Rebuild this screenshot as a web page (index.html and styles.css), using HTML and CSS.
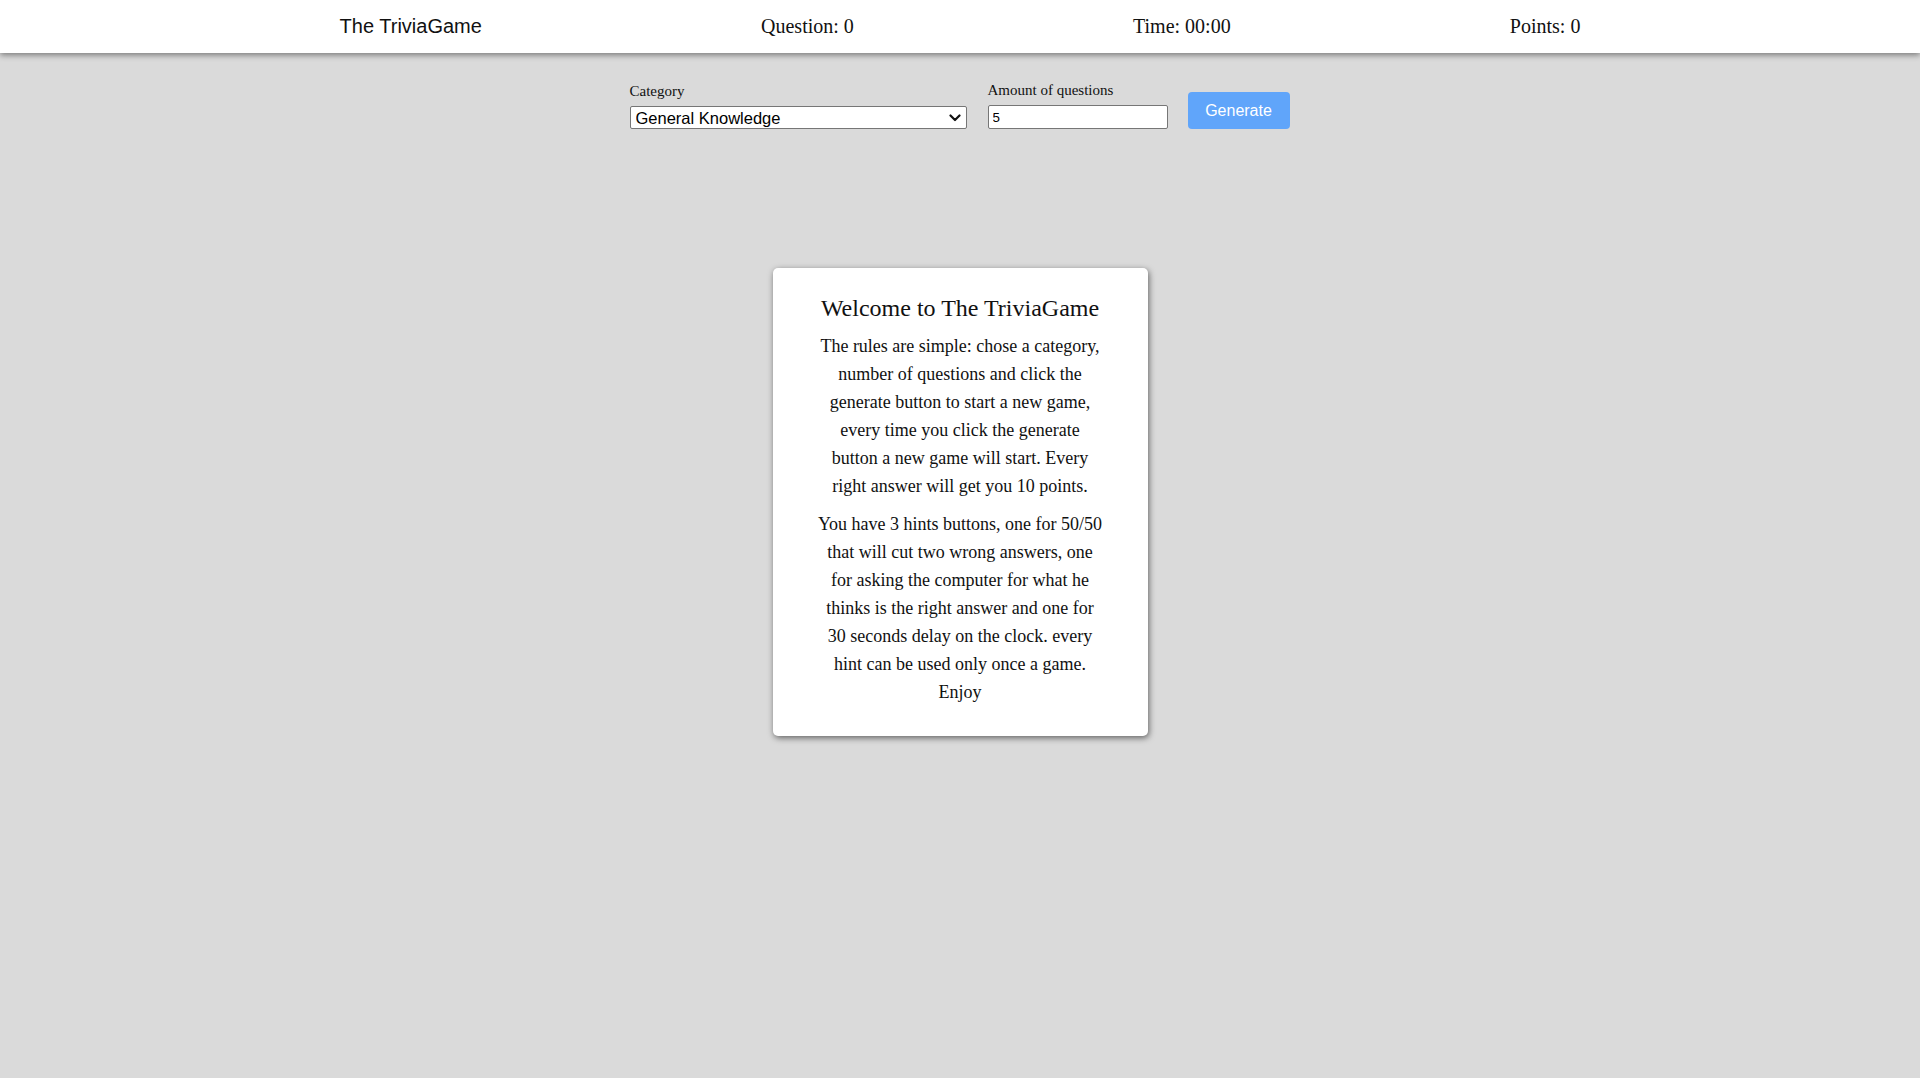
FILE: index.html
```html
<!DOCTYPE html>
<html lang="en">
<head>
<meta charset="utf-8">
<title>The TriviaGame</title>
<link rel="stylesheet" href="styles.css">
</head>
<body>
<header class="topbar">
  <div class="brand">The TriviaGame</div>
  <div class="stat">Question: 0</div>
  <div class="stat">Time: 00:00</div>
  <div class="stat">Points: 0</div>
</header>
<main class="main">
  <form class="controls">
    <div class="field field-category">
      <label class="field-label" for="category">Category</label>
      <div class="select-wrap">
        <select id="category" class="select">
          <option>General Knowledge</option>
          <option>Entertainment: Books</option>
          <option>Entertainment: Film</option>
          <option>Science &amp; Nature</option>
        </select>
        <svg class="chevron" width="12" height="8" viewBox="0 0 12 8" aria-hidden="true"><path d="M1.5 1.5 L6 6 L10.5 1.5" fill="none" stroke="#111" stroke-width="2.2" stroke-linecap="round" stroke-linejoin="round"/></svg>
      </div>
    </div>
    <div class="field field-amount">
      <label class="field-label" for="amount">Amount of questions</label>
      <input id="amount" class="input" type="number" value="5">
    </div>
    <button type="button" class="btn">Generate</button>
  </form>
  <section class="card">
    <h2 class="card-title">Welcome to The TriviaGame</h2>
    <p class="card-text">The rules are simple: chose a category, number of questions and click the generate button to start a new game, every time you click the generate button a new game will start. Every right answer will get you 10 points.</p>
    <p class="card-text">You have 3 hints buttons, one for 50/50 that will cut two wrong answers, one for asking the computer for what he thinks is the right answer and one for 30 seconds delay on the clock. every hint can be used only once a game. Enjoy</p>
  </section>
</main>
</body>
</html>
```
FILE: styles.css
```css
html, body {
  margin: 0;
  padding: 0;
}
body {
  background: #dadada;
  font-family: "Liberation Serif", "Times New Roman", serif;
  color: #111;
  min-height: 1078px;
}
.topbar {
  height: 53px;
  background: #fff;
  box-shadow: 0 2px 6px rgba(0, 0, 0, 0.45);
  display: flex;
  align-items: center;
  justify-content: space-around;
  padding: 0 200px;
  position: relative;
  z-index: 1;
}
.brand {
  font-family: "Liberation Sans", Arial, sans-serif;
  font-size: 20px;
  color: #111;
}
.stat {
  font-family: "Liberation Serif", "Times New Roman", serif;
  font-size: 20px;
  color: #111;
}
.main {
  display: flex;
  flex-direction: column;
  align-items: center;
}
.controls {
  display: flex;
  align-items: flex-end;
  gap: 21px;
  padding-top: 29px;
  margin: 0 0 0 -1px;
}
.field {
  display: flex;
  flex-direction: column;
}
.field-label {
  font-family: "Liberation Serif", "Times New Roman", serif;
  font-size: 15px;
  line-height: 17px;
  margin-bottom: 6px;
  color: #111;
}
.select-wrap {
  position: relative;
  width: 337px;
  height: 23px;
}
.select {
  width: 337px;
  height: 23px;
  font-family: "Liberation Sans", Arial, sans-serif;
  font-size: 16.5px;
  color: #000;
  background: #fff;
  border: 1px solid #767676;
  border-radius: 2px;
  padding: 0 24px 0 5px;
  margin: 0;
  box-sizing: border-box;
  -webkit-appearance: none;
  appearance: none;
}
.chevron {
  position: absolute;
  right: 6px;
  top: 8px;
  pointer-events: none;
}
.input {
  width: 180px;
  height: 24px;
  font-family: "Liberation Sans", Arial, sans-serif;
  font-size: 13.33px;
  color: #000;
  background: #fff;
  border: 1px solid #767676;
  border-radius: 2px;
  padding: 0 4px;
  margin: 0;
  box-sizing: border-box;
  -moz-appearance: textfield;
}
.input::-webkit-outer-spin-button,
.input::-webkit-inner-spin-button {
  -webkit-appearance: none;
  margin: 0;
}
.btn {
  height: 37px;
  width: 102px;
  padding: 0;
  background: #60a5fa;
  color: #fff;
  border: none;
  border-radius: 4px;
  font-family: "Liberation Sans", Arial, sans-serif;
  font-size: 16px;
  margin: 0 0 0 -1px;
  cursor: pointer;
}
.card {
  width: 288px;
  margin-top: 139px;
  padding: 27px 43.5px 30px;
  background: #fff;
  border-radius: 5px;
  box-shadow: 1px 2px 6px rgba(0, 0, 0, 0.55);
  text-align: center;
}
.card-title {
  font-family: "Liberation Serif", "Times New Roman", serif;
  font-size: 24px;
  font-weight: normal;
  line-height: normal;
  margin: 0 0 10px;
  color: #111;
}
.card-text {
  font-family: "Liberation Serif", "Times New Roman", serif;
  font-size: 18px;
  line-height: 28px;
  margin: 0 0 10px;
  color: #111;
}
.card-text:last-child {
  margin-bottom: 0;
}
```
